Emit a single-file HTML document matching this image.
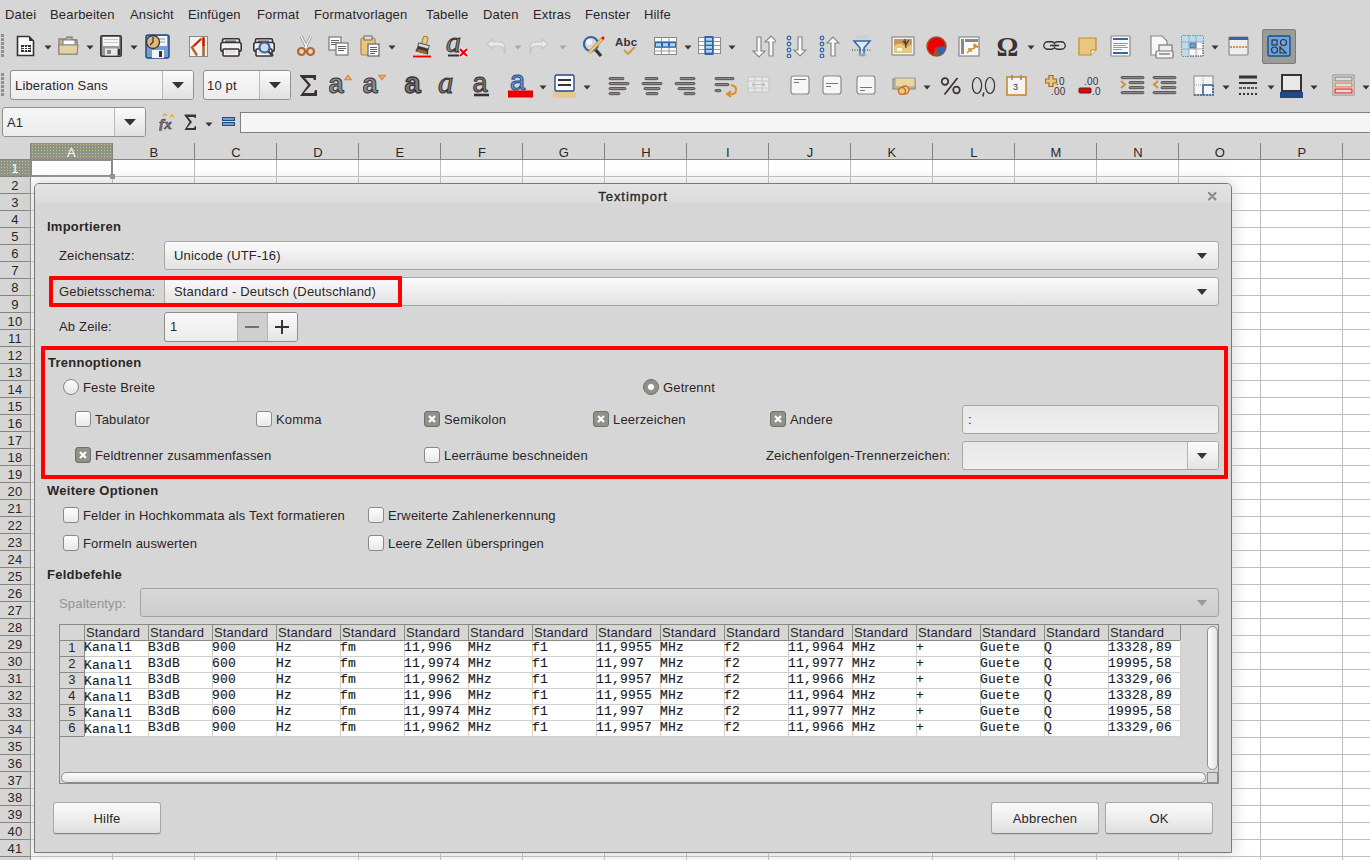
<!DOCTYPE html>
<html><head><meta charset="utf-8"><style>
*{margin:0;padding:0;box-sizing:border-box}
html,body{width:1370px;height:860px;overflow:hidden;background:#d6d6d6;font-family:"Liberation Sans",sans-serif;font-size:13px;color:#2b2627;letter-spacing:0.17px}
.a{position:absolute}
.t{position:absolute;white-space:nowrap;line-height:13px}
.b{font-weight:bold;letter-spacing:0.25px}
.combo{position:absolute;border:1px solid #a8a8a3;border-radius:3px;background:linear-gradient(#fbfbfb,#ededed 55%,#e2e2e2)}
.arr{position:absolute;width:0;height:0;border-left:5.5px solid transparent;border-right:5.5px solid transparent;border-top:6px solid #3a3135}
.red{position:absolute;border:4px solid #ff0000;border-radius:1px}
.cb{position:absolute;width:16px;height:16px;border:1px solid #8a8a85;border-radius:3px;background:linear-gradient(#fdfdfd,#e8e8e8)}
.cbx{position:absolute;width:16px;height:16px;border:1px solid #6e716a;border-radius:3px;background:#8f9289}
.rb{position:absolute;width:16px;height:16px;border:1px solid #85857f;border-radius:50%;background:linear-gradient(#fdfdfd,#e6e6e6)}
.btn{position:absolute;border:1px solid #a8a8a3;border-bottom-color:#8a8a85;box-shadow:0 1px 0 rgba(0,0,0,.08);border-radius:3px;background:linear-gradient(#fafafa,#ebebeb 60%,#dedede);text-align:center}
.gl{position:absolute;background:#c6c6c6}
</style></head><body>
<div class="a" style="left:1px;top:34px;width:3px;height:3px;background:#8f918b"></div>
<div class="a" style="left:1px;top:38px;width:3px;height:3px;background:#8f918b"></div>
<div class="a" style="left:1px;top:42px;width:3px;height:3px;background:#8f918b"></div>
<div class="a" style="left:1px;top:46px;width:3px;height:3px;background:#8f918b"></div>
<div class="a" style="left:1px;top:50px;width:3px;height:3px;background:#8f918b"></div>
<div class="a" style="left:1px;top:54px;width:3px;height:3px;background:#8f918b"></div>
<div class="a" style="left:1px;top:73px;width:3px;height:3px;background:#8f918b"></div>
<div class="a" style="left:1px;top:77px;width:3px;height:3px;background:#8f918b"></div>
<div class="a" style="left:1px;top:81px;width:3px;height:3px;background:#8f918b"></div>
<div class="a" style="left:1px;top:85px;width:3px;height:3px;background:#8f918b"></div>
<div class="a" style="left:1px;top:89px;width:3px;height:3px;background:#8f918b"></div>
<div class="a" style="left:1px;top:93px;width:3px;height:3px;background:#8f918b"></div>
<svg class="a" style="left:16px;top:35px" width="19" height="22" viewBox="0 0 19 22"><path d="M1.5 1.5H13L17.5 6V20.5H1.5Z" fill="#fbfbfb" stroke="#3a3135" stroke-width="1.6"/><path d="M13 1L18 6H13Z" fill="#3a3135"/><rect x="5" y="10" width="10" height="7" fill="#3a3135"/><path d="M5.5 12.5H14.5M5.5 14.5H14.5M8.5 10.5V16.5M11.5 10.5V16.5" stroke="#fff" stroke-width="1"/></svg>
<svg class="a" style="left:44px;top:45px" width="8" height="5" viewBox="0 0 8 5"><path d="M0.5 0.5H7.5L4 4.5Z" fill="#3a3135"/></svg>
<svg class="a" style="left:58px;top:36px" width="21" height="20" viewBox="0 0 21 20"><path d="M1 3H8L9 1H14V4H19V18H1Z" fill="#c8b48a" stroke="#888a85" stroke-width="1.5"/><rect x="5" y="4" width="12" height="5" fill="#fff" stroke="#777" stroke-width="1"/><path d="M1 9H20L19 18H1Z" fill="#e6d2a0" stroke="#888a85" stroke-width="1.2"/></svg>
<svg class="a" style="left:86px;top:45px" width="8" height="5" viewBox="0 0 8 5"><path d="M0.5 0.5H7.5L4 4.5Z" fill="#3a3135"/></svg>
<svg class="a" style="left:100px;top:35px" width="22" height="22" viewBox="0 0 22 22"><rect x="0.8" y="0.8" width="20.4" height="20.4" rx="1.5" fill="#9a9a96" stroke="#3a3135" stroke-width="1.6"/><rect x="3" y="2" width="16" height="9" fill="#f6f6f6"/><path d="M4 4.5H18M4 7.5H18" stroke="#c8c8c8"/><rect x="5" y="13.5" width="12" height="7" fill="#e8e8e8"/><rect x="7" y="15" width="4" height="4" fill="#888"/><rect x="18" y="14" width="2" height="6" fill="#3a3135"/></svg>
<svg class="a" style="left:130px;top:45px" width="8" height="5" viewBox="0 0 8 5"><path d="M0.5 0.5H7.5L4 4.5Z" fill="#3a3135"/></svg>
<svg class="a" style="left:145px;top:34px" width="25" height="25" viewBox="0 0 25 25"><rect x="1" y="1" width="23" height="23" rx="2" fill="#729fcf" stroke="#204a87" stroke-width="1.5"/><rect x="10" y="2" width="12" height="10" fill="#f4f4f4"/><path d="M12 5H20M12 8H20" stroke="#999"/><rect x="7" y="16" width="12" height="8" fill="#f4f4f4"/><rect x="14" y="17" width="3" height="6" fill="#3a3135"/><circle cx="8" cy="8" r="6.5" fill="#e0b87a" stroke="#3a3135" stroke-width="1.3"/><path d="M8 3V8L5 11" stroke="#3a3135" stroke-width="1.3" fill="none"/></svg>
<svg class="a" style="left:189px;top:36px" width="19" height="21" viewBox="0 0 19 21"><rect x="0.5" y="0.5" width="18" height="20" fill="#f2f2f2" stroke="#8a8a85" stroke-width="1"/><path d="M12.5 2.5L3 11.5L8 19.5" stroke="#b5672b" stroke-width="2.4" fill="none"/><path d="M11.5 3.5L5 10" stroke="#e00" stroke-width="1.3"/><path d="M14.5 1V20" stroke="#b5672b" stroke-width="2.6"/><path d="M14.5 2V10" stroke="#e00" stroke-width="2"/></svg>
<svg class="a" style="left:220px;top:38px" width="22" height="19" viewBox="0 0 22 19"><rect x="2.5" y="0.8" width="17" height="5" rx="1.5" fill="#e4e4e4" stroke="#3a3135" stroke-width="1.6"/><rect x="5" y="2.5" width="11" height="1.6" fill="#666"/><rect x="0.8" y="4.5" width="20.4" height="9" rx="2" fill="#f2f2f2" stroke="#3a3135" stroke-width="1.6"/><rect x="3" y="11" width="16" height="7" rx="1" fill="#f6f6f6" stroke="#3a3135" stroke-width="1.6"/><rect x="5" y="12" width="11" height="4" fill="#e4e4e4"/></svg>
<svg class="a" style="left:253px;top:38px" width="23" height="19" viewBox="0 0 23 19"><rect x="2.5" y="0.8" width="17" height="5" rx="1.5" fill="#e4e4e4" stroke="#3a3135" stroke-width="1.6"/><rect x="5" y="2.5" width="11" height="1.6" fill="#666"/><rect x="0.8" y="4.5" width="20.4" height="9" rx="2" fill="#f2f2f2" stroke="#3a3135" stroke-width="1.6"/><rect x="3" y="11" width="16" height="7" rx="1" fill="#f6f6f6" stroke="#3a3135" stroke-width="1.6"/><rect x="5" y="12" width="11" height="4" fill="#e4e4e4"/><circle cx="11.5" cy="9.5" r="5" fill="#d8d8d8" stroke="#3465a4" stroke-width="2.2"/><path d="M15.5 13.5L20 18" stroke="#3a3135" stroke-width="2.2"/></svg>
<svg class="a" style="left:297px;top:35px" width="18" height="22" viewBox="0 0 18 22"><path d="M4 1L10 13M14 1L8 13" stroke="#999" stroke-width="3"/><path d="M4 1L10 13M14 1L8 13" stroke="#f4f4f4" stroke-width="1.5"/><circle cx="4.5" cy="16.5" r="3.5" fill="none" stroke="#b5672b" stroke-width="2.2"/><circle cx="13.5" cy="16.5" r="3.5" fill="none" stroke="#b5672b" stroke-width="2.2"/></svg>
<svg class="a" style="left:328px;top:36px" width="21" height="20" viewBox="0 0 21 20"><rect x="1" y="1" width="12" height="13" fill="#fbfbfb" stroke="#777" stroke-width="1.2"/><path d="M3 4.5H11M3 6.5H11M3 8.5H9" stroke="#666"/><rect x="8" y="7" width="12" height="12" fill="#fbfbfb" stroke="#777" stroke-width="1.2"/><path d="M10 10.5H18M10 12.5H18M10 14.5H16" stroke="#666"/></svg>
<svg class="a" style="left:360px;top:35px" width="20" height="22" viewBox="0 0 20 22"><rect x="1" y="3" width="14" height="17" rx="1.5" fill="#e9c77f" stroke="#b08040" stroke-width="1.2"/><rect x="4" y="1" width="8" height="4" fill="#ddd" stroke="#666" stroke-width="1"/><rect x="8" y="9" width="11" height="12" fill="#fbfbfb" stroke="#666" stroke-width="1.2"/><path d="M10 12.5H17M10 14.5H17M10 16.5H17M10 18.5H15" stroke="#666"/></svg>
<svg class="a" style="left:388px;top:45px" width="8" height="5" viewBox="0 0 8 5"><path d="M0.5 0.5H7.5L4 4.5Z" fill="#3a3135"/></svg>
<svg class="a" style="left:411px;top:35px" width="24" height="23" viewBox="0 0 24 23"><g transform="rotate(15 12 11)"><rect x="10" y="1" width="5" height="9" rx="2.2" fill="#e9c77f" stroke="#a67c3a" stroke-width="1"/><rect x="7" y="9" width="11" height="3.5" fill="#dcdcdc" stroke="#555" stroke-width="1"/><path d="M7 12.5H18L19 18H6Z" fill="#3a3135"/><path d="M8 15H17L18 18H7Z" fill="#a0602a"/></g><path d="M2 21.5H20" stroke="#e00" stroke-width="1.8"/></svg>
<svg class="a" style="left:446px;top:35px" width="24" height="24" viewBox="0 0 24 24"><text x="0" y="17" font-family="Liberation Serif" font-style="italic" font-size="30" fill="#8a8a85" stroke="#3a3135" stroke-width="1">a</text><path d="M2 20.5H13" stroke="#3a3135" stroke-width="2"/><path d="M14 14L21 21M21 14L14 21" stroke="#fff" stroke-width="4"/><path d="M14 14L21 21M21 14L14 21" stroke="#e00" stroke-width="2.2"/></svg>
<svg class="a" style="left:485px;top:37px" width="22" height="17" viewBox="0 0 22 17"><path d="M8 2L2 7L8 12V9H14Q19 9 19 13V16H20V11Q20 5 14 5H8Z" fill="#eaeaea" stroke="#c4c4c4" stroke-width="1.2"/></svg>
<svg class="a" style="left:514px;top:45px" width="8" height="5" viewBox="0 0 8 5"><path d="M0.5 0.5H7.5L4 4.5Z" fill="#a9aaa5"/></svg>
<svg class="a" style="left:528px;top:37px" width="22" height="17" viewBox="0 0 22 17"><path d="M14 2L20 7L14 12V9H8Q3 9 3 13V16H2V11Q2 5 8 5H14Z" fill="#eaeaea" stroke="#c4c4c4" stroke-width="1.2"/></svg>
<svg class="a" style="left:559px;top:45px" width="8" height="5" viewBox="0 0 8 5"><path d="M0.5 0.5H7.5L4 4.5Z" fill="#a9aaa5"/></svg>
<svg class="a" style="left:582px;top:35px" width="23" height="22" viewBox="0 0 23 22"><path d="M13 14L19 21" stroke="#3a3135" stroke-width="3.2"/><circle cx="9" cy="9" r="7" fill="#d8d8d8" stroke="#3465a4" stroke-width="2.2"/><circle cx="7" cy="7" r="3" fill="#f4f4f4"/><path d="M21 3L7 18" stroke="#c8a050" stroke-width="3.5"/><path d="M21 3L7 18" stroke="#f0d890" stroke-width="1.2"/><circle cx="21" cy="3" r="1.5" fill="#e00"/></svg>
<svg class="a" style="left:615px;top:36px" width="23" height="21" viewBox="0 0 23 21"><text x="0" y="10" font-family="Liberation Sans" font-weight="bold" font-size="11.5" fill="#3a3135">Abc</text><path d="M9 14L13 18L20 11" stroke="#c8a050" stroke-width="2.2" fill="none"/></svg>
<svg class="a" style="left:654px;top:37px" width="23" height="18" viewBox="0 0 23 18"><rect x="0.5" y="0.5" width="22" height="17" fill="#fbfbfb" stroke="#8a8a85" stroke-width="1"/><path d="M0.5 4.5H22.5M0.5 10.5H22.5M0.5 14H22.5M7.5 0.5V17.5M15 0.5V17.5" stroke="#9a9a96" stroke-width="1"/><rect x="1" y="5" width="21" height="5.5" fill="#3465a4"/><rect x="2" y="6.2" width="5" height="3.2" fill="#a8d8f0"/><rect x="9" y="6.2" width="5" height="3.2" fill="#a8d8f0"/><rect x="16" y="6.2" width="5" height="3.2" fill="#a8d8f0"/></svg>
<svg class="a" style="left:684px;top:45px" width="8" height="5" viewBox="0 0 8 5"><path d="M0.5 0.5H7.5L4 4.5Z" fill="#3a3135"/></svg>
<svg class="a" style="left:698px;top:36px" width="23" height="19" viewBox="0 0 23 19"><rect x="0.5" y="1.5" width="22" height="16" fill="#fbfbfb" stroke="#8a8a85" stroke-width="1"/><path d="M0.5 5.5H22.5M0.5 9.5H22.5M0.5 13.5H22.5M7 1.5V17.5M15.5 1.5V17.5" stroke="#9a9a96" stroke-width="1"/><rect x="6.5" y="0" width="9" height="19" fill="#3465a4"/><rect x="8" y="2" width="6" height="2.6" fill="#a8d8f0"/><rect x="8" y="6" width="6" height="2.6" fill="#a8d8f0"/><rect x="8" y="10" width="6" height="2.6" fill="#a8d8f0"/><rect x="8" y="14" width="6" height="2.6" fill="#a8d8f0"/></svg>
<svg class="a" style="left:728px;top:45px" width="8" height="5" viewBox="0 0 8 5"><path d="M0.5 0.5H7.5L4 4.5Z" fill="#3a3135"/></svg>
<svg class="a" style="left:751px;top:35px" width="25" height="23" viewBox="0 0 25 23"><path d="M6 2V16H2L8 22L14 16H10V2Z" fill="#f8f8f8" stroke="#888" stroke-width="1.2"/><path d="M18 21V7H14L20 1L26 7H22V21Z" fill="#f8f8f8" stroke="#888" stroke-width="1.2"/></svg>
<svg class="a" style="left:786px;top:35px" width="21" height="23" viewBox="0 0 21 23"><g fill="none" stroke="#3465a4" stroke-width="1.2"><circle cx="3" cy="3" r="1.8"/><circle cx="3" cy="9" r="1.8"/><circle cx="3" cy="15" r="1.8"/><circle cx="3" cy="21" r="1.8"/></g><path d="M12 2V15H8L14 21L20 15H16V2Z" fill="#f8f8f8" stroke="#888" stroke-width="1.2"/></svg>
<svg class="a" style="left:819px;top:35px" width="21" height="23" viewBox="0 0 21 23"><g fill="none" stroke="#3465a4" stroke-width="1.2"><circle cx="3" cy="3" r="1.8"/><circle cx="3" cy="9" r="1.8"/><circle cx="3" cy="15" r="1.8"/><circle cx="3" cy="21" r="1.8"/></g><path d="M12 21V8H8L14 2L20 8H16V21Z" fill="#f8f8f8" stroke="#888" stroke-width="1.2"/></svg>
<svg class="a" style="left:851px;top:34px" width="22" height="24" viewBox="0 0 22 24"><rect x="4" y="1" width="14" height="4" fill="#ccc" opacity=".6"/><path d="M3 7H19L13 14V21H9V14Z" fill="#d8ecf8" stroke="#3465a4" stroke-width="1.5"/><path d="M1 16H21" stroke="#333" stroke-dasharray="1 1.5"/><ellipse cx="11" cy="21" rx="5" ry="2" fill="#bbb" opacity=".6"/></svg>
<svg class="a" style="left:891px;top:36px" width="24" height="20" viewBox="0 0 24 20"><rect x="1" y="1" width="22" height="18" fill="#f4f4f4" stroke="#888" stroke-width="1.2"/><rect x="3" y="3" width="18" height="14" fill="#c89a58"/><path d="M3 10Q8 6 12 9T21 8V17H3Z" fill="#e9c77f"/><path d="M14 3L15 12M12 5L15 8L18 4" stroke="#3a3135" stroke-width="1.2" fill="none"/><rect x="6" y="12" width="5" height="3" fill="#fff"/></svg>
<svg class="a" style="left:926px;top:36px" width="21" height="21" viewBox="0 0 21 21"><circle cx="10.5" cy="10.5" r="9.5" fill="#e00" stroke="#a0522d" stroke-width="1.5"/><path d="M10 11L20 10Q20 17 13 20Z" fill="#3465a4"/><path d="M10 11L7 19H13Z" fill="#a0522d"/></svg>
<svg class="a" style="left:958px;top:36px" width="22" height="21" viewBox="0 0 22 21"><rect x="1" y="1" width="20" height="19" fill="#fbfbfb" stroke="#888" stroke-width="1.2"/><rect x="3" y="3" width="3" height="15" fill="#888"/><rect x="7" y="3" width="13" height="3" fill="#888"/><path d="M9 17L13 13H10M13 13V16M16 8L20 11H17M16 8V11M13 13Q17 13 17 10" stroke="#d8902a" stroke-width="1.6" fill="none"/></svg>
<svg class="a" style="left:997px;top:37px" width="23" height="21" viewBox="0 0 23 21"><text x="-0.5" y="19" font-family="Liberation Serif" font-weight="bold" font-size="27" fill="#3a3135" textLength="22" lengthAdjust="spacingAndGlyphs">Ω</text></svg>
<svg class="a" style="left:1027px;top:45px" width="8" height="5" viewBox="0 0 8 5"><path d="M0.5 0.5H7.5L4 4.5Z" fill="#3a3135"/></svg>
<svg class="a" style="left:1043px;top:40px" width="23" height="12" viewBox="0 0 23 12"><rect x="1" y="2" width="11" height="7" rx="3.5" fill="none" stroke="#3a3135" stroke-width="1.8"/><rect x="11" y="2" width="11" height="7" rx="3.5" fill="none" stroke="#3a3135" stroke-width="1.8"/><rect x="1.8" y="3" width="9.4" height="5" rx="2.5" fill="none" stroke="#f0f0f0" stroke-width=".8"/><rect x="11.8" y="3" width="9.4" height="5" rx="2.5" fill="none" stroke="#f0f0f0" stroke-width=".8"/><path d="M7 5.5H16" stroke="#3a3135" stroke-width="1.6"/></svg>
<svg class="a" style="left:1078px;top:37px" width="19" height="19" viewBox="0 0 19 19"><path d="M1 1H18V13L13 18H1Z" fill="#e9c77f" stroke="#c8892a" stroke-width="1.2"/><path d="M13 18V13H18" fill="#fff3d0" stroke="#c8892a" stroke-width="1"/></svg>
<svg class="a" style="left:1110px;top:35px" width="21" height="22" viewBox="0 0 21 22"><rect x="1" y="1" width="19" height="20" rx="1" fill="#fbfbfb" stroke="#888" stroke-width="1.2"/><rect x="3" y="3" width="15" height="2" fill="#3465a4"/><path d="M3 8.5H18M3 10.5H16M3 12.5H18M3 14.5H12" stroke="#999"/><rect x="3" y="17" width="15" height="2" fill="#3465a4"/></svg>
<svg class="a" style="left:1150px;top:35px" width="24" height="24" viewBox="0 0 24 24"><path d="M1 1H12L17 6V20H1Z" fill="#f8f8f8" stroke="#888" stroke-width="1.2"/><rect x="9" y="10" width="13" height="8" fill="#eee" stroke="#777" stroke-width="1.2"/><rect x="6" y="16" width="17" height="7" rx="1" fill="#f4f4f4" stroke="#777" stroke-width="1.2"/><path d="M9 19H20" stroke="#666" stroke-width="1.2"/></svg>
<svg class="a" style="left:1181px;top:35px" width="23" height="22" viewBox="0 0 23 22"><rect x="1" y="1" width="21" height="20" fill="#fbfbfb" stroke="#3a3135" stroke-width="1" stroke-dasharray="1.5 1"/><rect x="1" y="1" width="21" height="6" fill="#b8dcf2"/><rect x="1" y="1" width="7" height="20" fill="#b8dcf2"/><rect x="9" y="8" width="6" height="5" fill="#729fcf" stroke="#3465a4"/><path d="M1 7H22M1 14H22M8 1V21M15 1V21" stroke="#999" stroke-width=".8"/></svg>
<svg class="a" style="left:1211px;top:45px" width="8" height="5" viewBox="0 0 8 5"><path d="M0.5 0.5H7.5L4 4.5Z" fill="#3a3135"/></svg>
<svg class="a" style="left:1228px;top:36px" width="21" height="20" viewBox="0 0 21 20"><rect x="1" y="1" width="19" height="18" rx="1" fill="#eee" stroke="#888" stroke-width="1.2"/><rect x="1" y="1" width="19" height="3" fill="#3465a4"/><path d="M2 11H19" stroke="#c8702a" stroke-width="1.4" stroke-dasharray="2 1"/></svg>
<div class="a" style="left:1262px;top:29px;width:34px;height:35px;background:#9a9c96;border:1px solid #7a7c76;border-radius:2px"></div>
<svg class="a" style="left:1267px;top:35px" width="24" height="22" viewBox="0 0 24 22"><rect x="1" y="1" width="22" height="20" rx="1.5" fill="#69a6e0" stroke="#1f4e8a" stroke-width="1.4"/><rect x="5" y="5" width="5" height="5" fill="none" stroke="#3a3135" stroke-width="1.2"/><circle cx="16.5" cy="7.5" r="3" fill="none" stroke="#3a3135" stroke-width="1.2"/><circle cx="7.5" cy="15" r="3" fill="none" stroke="#3a3135" stroke-width="1.2"/><path d="M13 12V18H19Z" fill="none" stroke="#3a3135" stroke-width="1.2"/></svg>
<div class="a" style="left:10px;top:70px;width:184px;height:30px;border:1px solid #8f918b;border-radius:3px;background:linear-gradient(#f9f9f9,#ececec)"></div>
<div class="a" style="left:162px;top:71px;width:31px;height:28px;border-left:1px solid #b9b9b4;background:linear-gradient(#fbfbfb,#e0e0e0);border-radius:0 2px 2px 0"></div>
<svg class="a" style="left:172px;top:82px" width="12" height="7" viewBox="0 0 12 7"><path d="M0 0H12L6 6.5Z" fill="#3a3135"/></svg>
<div class="t" style="left:15px;top:79px">Liberation Sans</div>
<div class="a" style="left:203px;top:70px;width:88px;height:30px;border:1px solid #8f918b;border-radius:3px;background:linear-gradient(#f9f9f9,#ececec)"></div>
<div class="a" style="left:259px;top:71px;width:31px;height:28px;border-left:1px solid #b9b9b4;background:linear-gradient(#fbfbfb,#e0e0e0);border-radius:0 2px 2px 0"></div>
<svg class="a" style="left:269px;top:82px" width="12" height="7" viewBox="0 0 12 7"><path d="M0 0H12L6 6.5Z" fill="#3a3135"/></svg>
<div class="t" style="left:207px;top:79px">10 pt</div>
<svg class="a" style="left:299px;top:74px" width="19" height="23" viewBox="0 0 19 23"><path d="M1 1H17V6H15L14 4H6L12 11L5 19H15L16 16H18V22H1L9 11L1 2Z" fill="#3a3135"/></svg>
<svg class="a" style="left:329px;top:72px" width="24" height="24" viewBox="0 0 24 24"><text x="-0.5" y="20.5" font-family="Liberation Sans" font-weight="bold" font-size="27" fill="#8a8a85" stroke="#3a3135" stroke-width="1">a</text><path d="M16 7.5L19 3.5L22 7.5Z" fill="none" stroke="#d8902a" stroke-width="1.5"/></svg>
<svg class="a" style="left:363px;top:72px" width="24" height="24" viewBox="0 0 24 24"><text x="-0.5" y="20.5" font-family="Liberation Sans" font-weight="bold" font-size="27" fill="#8a8a85" stroke="#3a3135" stroke-width="1">a</text><path d="M16 3.5L19 7.5L22 3.5Z" fill="none" stroke="#d8902a" stroke-width="1.5"/></svg>
<svg class="a" style="left:404px;top:72px" width="22" height="24" viewBox="0 0 22 24"><text x="0.5" y="20.5" font-family="Liberation Sans" font-weight="bold" font-size="29" fill="#7a7a75" stroke="#3a3135" stroke-width="1.3">a</text></svg>
<svg class="a" style="left:438px;top:72px" width="22" height="24" viewBox="0 0 22 24"><text x="0" y="20.5" font-family="Liberation Serif" font-style="italic" font-size="31" fill="#7a7a75" stroke="#3a3135" stroke-width="1">a</text></svg>
<svg class="a" style="left:472px;top:72px" width="20" height="26" viewBox="0 0 20 26"><text x="0.5" y="20" font-family="Liberation Sans" font-size="27" fill="#7a7a75" stroke="#3a3135" stroke-width="1">a</text><path d="M2 23H17" stroke="#3a3135" stroke-width="2.6"/></svg>
<svg class="a" style="left:508px;top:72px" width="25" height="26" viewBox="0 0 25 26"><text x="2" y="17.5" font-family="Liberation Sans" font-size="27" fill="#729fcf" stroke="#204a87" stroke-width="1">a</text><rect x="0.5" y="19" width="24" height="6" fill="#e00" stroke="#d00"/></svg>
<svg class="a" style="left:539px;top:85px" width="8" height="5" viewBox="0 0 8 5"><path d="M0.5 0.5H7.5L4 4.5Z" fill="#3a3135"/></svg>
<svg class="a" style="left:552px;top:74px" width="25" height="24" viewBox="0 0 25 24"><rect x="3" y="1" width="19" height="16" rx="1.5" fill="#fbfbfb" stroke="#204a87" stroke-width="1.4"/><path d="M6 6H19M6 11H19" stroke="#3a3135" stroke-width="2"/><rect x="1" y="18" width="23" height="6" fill="#e5c98d"/></svg>
<svg class="a" style="left:583px;top:85px" width="8" height="5" viewBox="0 0 8 5"><path d="M0.5 0.5H7.5L4 4.5Z" fill="#3a3135"/></svg>
<svg class="a" style="left:608px;top:76px" width="22" height="20" viewBox="0 0 22 20"><rect x="1" y="1.5" width="15" height="2.2" rx="1.1" fill="#8a8a85" stroke="#3a3135" stroke-width=".7"/><rect x="1" y="6.5" width="20" height="2.2" rx="1.1" fill="#8a8a85" stroke="#3a3135" stroke-width=".7"/><rect x="1" y="11.5" width="17" height="2.2" rx="1.1" fill="#8a8a85" stroke="#3a3135" stroke-width=".7"/><rect x="1" y="16.5" width="11" height="2.2" rx="1.1" fill="#8a8a85" stroke="#3a3135" stroke-width=".7"/></svg>
<svg class="a" style="left:641px;top:76px" width="22" height="20" viewBox="0 0 22 20"><rect x="4" y="1.5" width="13" height="2.2" rx="1.1" fill="#8a8a85" stroke="#3a3135" stroke-width=".7"/><rect x="1" y="6.5" width="20" height="2.2" rx="1.1" fill="#8a8a85" stroke="#3a3135" stroke-width=".7"/><rect x="3" y="11.5" width="16" height="2.2" rx="1.1" fill="#8a8a85" stroke="#3a3135" stroke-width=".7"/><rect x="5" y="16.5" width="12" height="2.2" rx="1.1" fill="#8a8a85" stroke="#3a3135" stroke-width=".7"/></svg>
<svg class="a" style="left:674px;top:76px" width="22" height="20" viewBox="0 0 22 20"><rect x="6" y="1.5" width="15" height="2.2" rx="1.1" fill="#8a8a85" stroke="#3a3135" stroke-width=".7"/><rect x="1" y="6.5" width="20" height="2.2" rx="1.1" fill="#8a8a85" stroke="#3a3135" stroke-width=".7"/><rect x="4" y="11.5" width="17" height="2.2" rx="1.1" fill="#8a8a85" stroke="#3a3135" stroke-width=".7"/><rect x="10" y="16.5" width="11" height="2.2" rx="1.1" fill="#8a8a85" stroke="#3a3135" stroke-width=".7"/></svg>
<svg class="a" style="left:714px;top:76px" width="24" height="22" viewBox="0 0 24 22"><rect x="1" y="1.5" width="19" height="2.2" rx="1.1" fill="#8a8a85" stroke="#3a3135" stroke-width=".7"/><rect x="1" y="7.5" width="14" height="2.2" rx="1.1" fill="#8a8a85" stroke="#3a3135" stroke-width=".7"/><rect x="1" y="13.5" width="6" height="2.2" rx="1.1" fill="#8a8a85" stroke="#3a3135" stroke-width=".7"/><path d="M17 9Q23 10 22 15Q21 19 14 18M17 15L13 18L17 21" stroke="#d8902a" stroke-width="2" fill="none"/></svg>
<svg class="a" style="left:747px;top:76px" width="23" height="17" viewBox="0 0 23 17"><rect x="1" y="1" width="21" height="15" fill="#e8e8e8" stroke="#c4c4c4"/><path d="M1 5H22M1 12H22M8 1V5M15 1V5M8 12V16M15 12V16" stroke="#c4c4c4"/><path d="M5 8.5H18M5 8.5L8 6.5M5 8.5L8 10.5M18 8.5L15 6.5M18 8.5L15 10.5" stroke="#bdbdbd" stroke-width="1.2"/></svg>
<svg class="a" style="left:790px;top:75px" width="20" height="20" viewBox="0 0 20 20"><rect x="1" y="1" width="18" height="18" rx="2.5" fill="#f6f6f6" stroke="#8a8a85" stroke-width="1.2"/><path d="M4 4.5H16M4 7.5H9" stroke="#777" stroke-width="1"/></svg>
<svg class="a" style="left:822px;top:75px" width="20" height="20" viewBox="0 0 20 20"><rect x="1" y="1" width="18" height="18" rx="2.5" fill="#f6f6f6" stroke="#8a8a85" stroke-width="1.2"/><path d="M4 8.5H16M4 11.5H9" stroke="#777" stroke-width="1"/></svg>
<svg class="a" style="left:856px;top:75px" width="20" height="20" viewBox="0 0 20 20"><rect x="1" y="1" width="18" height="18" rx="2.5" fill="#f6f6f6" stroke="#8a8a85" stroke-width="1.2"/><path d="M4 12.5H16M4 15.5H9" stroke="#777" stroke-width="1"/></svg>
<svg class="a" style="left:892px;top:77px" width="24" height="18" viewBox="0 0 24 18"><rect x="1" y="2" width="22" height="10" fill="#d8c48a" stroke="#888" stroke-width="1.2"/><rect x="3" y="1" width="20" height="9" fill="#e8d8a0" stroke="#999" stroke-width="1"/><circle cx="13" cy="13" r="4" fill="#e9c77f" stroke="#c8702a" stroke-width="1.4"/><circle cx="10" cy="14" r="3.5" fill="#e9c77f" stroke="#c8702a" stroke-width="1.4"/></svg>
<svg class="a" style="left:923px;top:85px" width="8" height="5" viewBox="0 0 8 5"><path d="M0.5 0.5H7.5L4 4.5Z" fill="#3a3135"/></svg>
<svg class="a" style="left:940px;top:77px" width="22" height="18" viewBox="0 0 22 18"><circle cx="5" cy="4.5" r="3.3" fill="none" stroke="#3a3135" stroke-width="1.7"/><circle cx="16.5" cy="13" r="3.3" fill="none" stroke="#3a3135" stroke-width="1.7"/><path d="M17.5 1L4.5 17.5" stroke="#3a3135" stroke-width="1.7"/></svg>
<svg class="a" style="left:971px;top:76px" width="25" height="22" viewBox="0 0 25 22"><ellipse cx="6" cy="9.5" rx="4.6" ry="8" fill="none" stroke="#3a3135" stroke-width="1.2"/><ellipse cx="19" cy="9.5" rx="4.6" ry="8" fill="none" stroke="#3a3135" stroke-width="1.2"/><path d="M12.8 16.5L11.8 20.5" stroke="#3a3135" stroke-width="1.4"/></svg>
<svg class="a" style="left:1006px;top:74px" width="21" height="22" viewBox="0 0 21 22"><rect x="1" y="3" width="19" height="18" fill="#f4f4f4" stroke="#c8892a" stroke-width="1.6"/><path d="M6 1V6M15 1V6" stroke="#888" stroke-width="1.5"/><text x="7" y="16" font-family="Liberation Sans" font-size="9" fill="#3a3135">3</text></svg>
<svg class="a" style="left:1045px;top:74px" width="23" height="22" viewBox="0 0 23 22"><path d="M3 0.5H7V4H10.5V8H7V11.5H3V8H-0.5V4H3Z" transform="translate(1,1)" fill="#e9c77f" stroke="#a06a2a" stroke-width="1.2"/><text x="11" y="11" font-family="Liberation Sans" font-size="10" fill="#3a3135">.0</text><text x="6" y="21" font-family="Liberation Sans" font-size="10" fill="#3a3135">.00</text></svg>
<svg class="a" style="left:1078px;top:76px" width="23" height="20" viewBox="0 0 23 20"><text x="6" y="9" font-family="Liberation Sans" font-size="10" fill="#3a3135">.00</text><rect x="1" y="12" width="12" height="5" rx="1" fill="#e00" stroke="#3a3135" stroke-width="1"/><text x="14" y="19" font-family="Liberation Sans" font-size="10" fill="#3a3135">.0</text></svg>
<svg class="a" style="left:1120px;top:75px" width="25" height="20" viewBox="0 0 25 20"><rect x="1" y="1.5" width="23" height="2.2" rx="1.1" fill="#8a8a85" stroke="#3a3135" stroke-width=".7"/><rect x="9" y="6.5" width="15" height="2.2" rx="1.1" fill="#8a8a85" stroke="#3a3135" stroke-width=".7"/><rect x="9" y="11.5" width="15" height="2.2" rx="1.1" fill="#8a8a85" stroke="#3a3135" stroke-width=".7"/><rect x="1" y="16.5" width="23" height="2.2" rx="1.1" fill="#8a8a85" stroke="#3a3135" stroke-width=".7"/><path d="M1 6L5 9.5L1 13" stroke="#d8902a" stroke-width="2" fill="none"/></svg>
<svg class="a" style="left:1152px;top:75px" width="25" height="20" viewBox="0 0 25 20"><rect x="1" y="1.5" width="23" height="2.2" rx="1.1" fill="#8a8a85" stroke="#3a3135" stroke-width=".7"/><rect x="9" y="6.5" width="15" height="2.2" rx="1.1" fill="#8a8a85" stroke="#3a3135" stroke-width=".7"/><rect x="9" y="11.5" width="15" height="2.2" rx="1.1" fill="#8a8a85" stroke="#3a3135" stroke-width=".7"/><rect x="1" y="16.5" width="23" height="2.2" rx="1.1" fill="#8a8a85" stroke="#3a3135" stroke-width=".7"/><path d="M6 6L2 9.5L6 13" stroke="#d8902a" stroke-width="2" fill="none"/></svg>
<svg class="a" style="left:1193px;top:75px" width="21" height="21" viewBox="0 0 21 21"><rect x="1" y="1" width="19" height="19" fill="#f4f4f4" stroke="#888" stroke-width="1"/><path d="M10 1V10H20M1 10H10V20" stroke="#999" stroke-dasharray="1 1" fill="none"/><path d="M10 20V10H20" stroke="#3465a4" stroke-width="1.6" fill="none"/><path d="M1 20H20V10" stroke="#3465a4" stroke-width="1.6" fill="none" stroke-dasharray="2 1"/></svg>
<svg class="a" style="left:1222px;top:85px" width="8" height="5" viewBox="0 0 8 5"><path d="M0.5 0.5H7.5L4 4.5Z" fill="#3a3135"/></svg>
<svg class="a" style="left:1238px;top:75px" width="20" height="21" viewBox="0 0 20 21"><path d="M1 2H19" stroke="#3a3135" stroke-width="3"/><path d="M1 8H19" stroke="#3a3135" stroke-width="2"/><path d="M1 13H19" stroke="#3a3135" stroke-width="1.5" stroke-dasharray="3 1"/><path d="M1 19H19" stroke="#3a3135" stroke-width="2" stroke-dasharray="2 2"/></svg>
<svg class="a" style="left:1267px;top:85px" width="8" height="5" viewBox="0 0 8 5"><path d="M0.5 0.5H7.5L4 4.5Z" fill="#3a3135"/></svg>
<svg class="a" style="left:1279px;top:74px" width="25" height="24" viewBox="0 0 25 24"><rect x="3" y="1" width="19" height="16" fill="#e8e8e8" stroke="#3a3135" stroke-width="2"/><rect x="1" y="18" width="23" height="6" fill="#204a87"/></svg>
<svg class="a" style="left:1310px;top:85px" width="8" height="5" viewBox="0 0 8 5"><path d="M0.5 0.5H7.5L4 4.5Z" fill="#3a3135"/></svg>
<svg class="a" style="left:1332px;top:74px" width="23" height="22" viewBox="0 0 23 22"><rect x="1" y="1" width="21" height="20" fill="#f4f4f4" stroke="#888" stroke-width="1"/><rect x="3" y="3" width="17" height="4" fill="#ddd" stroke="#777"/><rect x="3" y="9" width="17" height="4" fill="#ddd" stroke="#c8702a"/><rect x="3" y="15" width="17" height="4" fill="#ddd" stroke="#e00"/></svg>
<svg class="a" style="left:1362px;top:85px" width="8" height="5" viewBox="0 0 8 5"><path d="M0.5 0.5H7.5L4 4.5Z" fill="#3a3135"/></svg>
<div class="a" style="left:2px;top:107px;width:144px;height:30px;border:1px solid #8f918b;border-radius:3px;background:linear-gradient(#f6f6f6,#ececec)"></div>
<div class="a" style="left:114px;top:108px;width:31px;height:28px;border-left:1px solid #b9b9b4;background:linear-gradient(#fbfbfb,#e0e0e0);border-radius:0 2px 2px 0"></div>
<svg class="a" style="left:124px;top:119px" width="12" height="7" viewBox="0 0 12 7"><path d="M0 0H12L6 6.5Z" fill="#3a3135"/></svg>
<div class="t" style="left:7px;top:116px">A1</div>
<svg class="a" style="left:159px;top:113px" width="17" height="18" viewBox="0 0 17 18"><text x="0" y="16" font-family="Liberation Serif" font-style="italic" font-weight="bold" font-size="15" fill="#7a7a75" stroke="#3a3135" stroke-width=".5">fx</text><path d="M4 3L6 1L8 3M11 4L13 2L15 4" stroke="#e9b03a" stroke-width="1.6" fill="none"/></svg>
<svg class="a" style="left:184px;top:114px" width="13" height="17" viewBox="0 0 13 17"><path d="M0.5 0.5H12V4H11L10 3H4L8 8L3 14H10L11 12H12V16H0.5L5.5 8L0.5 1.5Z" fill="#3a3135"/></svg>
<svg class="a" style="left:205px;top:122px" width="8" height="5" viewBox="0 0 8 5"><path d="M0.5 0.5H7.5L4 4.5Z" fill="#3a3135"/></svg>
<svg class="a" style="left:222px;top:117px" width="13" height="10" viewBox="0 0 13 10"><rect x="0.5" y="0.5" width="12" height="3" fill="#729fcf" stroke="#204a87"/><rect x="0.5" y="5.5" width="12" height="3" fill="#729fcf" stroke="#204a87"/></svg>
<div class="a" style="left:240px;top:112px;width:1140px;height:21px;border:1px solid #7f817b;background:#f5f5f5"></div>
<div class="t" style="left:5px;top:8px;">Datei</div>
<div class="t" style="left:50px;top:8px;">Bearbeiten</div>
<div class="t" style="left:130px;top:8px;">Ansicht</div>
<div class="t" style="left:188px;top:8px;">Einfügen</div>
<div class="t" style="left:257px;top:8px;">Format</div>
<div class="t" style="left:314px;top:8px;">Formatvorlagen</div>
<div class="t" style="left:426px;top:8px;">Tabelle</div>
<div class="t" style="left:483px;top:8px;">Daten</div>
<div class="t" style="left:533px;top:8px;">Extras</div>
<div class="t" style="left:585px;top:8px;">Fenster</div>
<div class="t" style="left:644px;top:8px;">Hilfe</div>
<div class="a" style="left:0px;top:159px;width:1370px;height:701px;background:#fff"></div>
<div class="a" style="left:0px;top:143px;width:1370px;height:16px;background:#d6d6d6"></div>
<div class="a" style="left:0px;top:159px;width:1370px;height:1px;background:#84847f"></div>
<div class="a" style="left:0px;top:160px;width:30px;height:700px;background:#d6d6d6"></div>
<div class="a" style="left:30px;top:143px;width:1px;height:717px;background:#84847f"></div>
<div class="a" style="left:112px;top:160px;width:1px;height:700px;background:#bebebe"></div>
<div class="a" style="left:112px;top:143px;width:1px;height:16px;background:#84847f"></div>
<div class="a" style="left:194px;top:160px;width:1px;height:700px;background:#bebebe"></div>
<div class="a" style="left:194px;top:143px;width:1px;height:16px;background:#84847f"></div>
<div class="a" style="left:276px;top:160px;width:1px;height:700px;background:#bebebe"></div>
<div class="a" style="left:276px;top:143px;width:1px;height:16px;background:#84847f"></div>
<div class="a" style="left:358px;top:160px;width:1px;height:700px;background:#bebebe"></div>
<div class="a" style="left:358px;top:143px;width:1px;height:16px;background:#84847f"></div>
<div class="a" style="left:440px;top:160px;width:1px;height:700px;background:#bebebe"></div>
<div class="a" style="left:440px;top:143px;width:1px;height:16px;background:#84847f"></div>
<div class="a" style="left:522px;top:160px;width:1px;height:700px;background:#bebebe"></div>
<div class="a" style="left:522px;top:143px;width:1px;height:16px;background:#84847f"></div>
<div class="a" style="left:604px;top:160px;width:1px;height:700px;background:#bebebe"></div>
<div class="a" style="left:604px;top:143px;width:1px;height:16px;background:#84847f"></div>
<div class="a" style="left:686px;top:160px;width:1px;height:700px;background:#bebebe"></div>
<div class="a" style="left:686px;top:143px;width:1px;height:16px;background:#84847f"></div>
<div class="a" style="left:768px;top:160px;width:1px;height:700px;background:#bebebe"></div>
<div class="a" style="left:768px;top:143px;width:1px;height:16px;background:#84847f"></div>
<div class="a" style="left:850px;top:160px;width:1px;height:700px;background:#bebebe"></div>
<div class="a" style="left:850px;top:143px;width:1px;height:16px;background:#84847f"></div>
<div class="a" style="left:932px;top:160px;width:1px;height:700px;background:#bebebe"></div>
<div class="a" style="left:932px;top:143px;width:1px;height:16px;background:#84847f"></div>
<div class="a" style="left:1014px;top:160px;width:1px;height:700px;background:#bebebe"></div>
<div class="a" style="left:1014px;top:143px;width:1px;height:16px;background:#84847f"></div>
<div class="a" style="left:1096px;top:160px;width:1px;height:700px;background:#bebebe"></div>
<div class="a" style="left:1096px;top:143px;width:1px;height:16px;background:#84847f"></div>
<div class="a" style="left:1178px;top:160px;width:1px;height:700px;background:#bebebe"></div>
<div class="a" style="left:1178px;top:143px;width:1px;height:16px;background:#84847f"></div>
<div class="a" style="left:1260px;top:160px;width:1px;height:700px;background:#bebebe"></div>
<div class="a" style="left:1260px;top:143px;width:1px;height:16px;background:#84847f"></div>
<div class="a" style="left:1342px;top:160px;width:1px;height:700px;background:#bebebe"></div>
<div class="a" style="left:1342px;top:143px;width:1px;height:16px;background:#84847f"></div>
<div class="t" style="left:52px;top:146px;width:40px;text-align:center;color:#fff">A</div>
<div class="t" style="left:134px;top:146px;width:40px;text-align:center;">B</div>
<div class="t" style="left:216px;top:146px;width:40px;text-align:center;">C</div>
<div class="t" style="left:298px;top:146px;width:40px;text-align:center;">D</div>
<div class="t" style="left:380px;top:146px;width:40px;text-align:center;">E</div>
<div class="t" style="left:462px;top:146px;width:40px;text-align:center;">F</div>
<div class="t" style="left:544px;top:146px;width:40px;text-align:center;">G</div>
<div class="t" style="left:626px;top:146px;width:40px;text-align:center;">H</div>
<div class="t" style="left:708px;top:146px;width:40px;text-align:center;">I</div>
<div class="t" style="left:790px;top:146px;width:40px;text-align:center;">J</div>
<div class="t" style="left:872px;top:146px;width:40px;text-align:center;">K</div>
<div class="t" style="left:954px;top:146px;width:40px;text-align:center;">L</div>
<div class="t" style="left:1036px;top:146px;width:40px;text-align:center;">M</div>
<div class="t" style="left:1118px;top:146px;width:40px;text-align:center;">N</div>
<div class="t" style="left:1200px;top:146px;width:40px;text-align:center;">O</div>
<div class="t" style="left:1282px;top:146px;width:40px;text-align:center;">P</div>
<div class="a" style="left:31px;top:176px;width:1339px;height:1px;background:#bebebe"></div>
<div class="a" style="left:0px;top:176px;width:30px;height:1px;background:#84847f"></div>
<div class="t" style="left:0px;top:162px;width:30px;text-align:center;color:#fff">1</div>
<div class="a" style="left:31px;top:193px;width:1339px;height:1px;background:#bebebe"></div>
<div class="a" style="left:0px;top:193px;width:30px;height:1px;background:#84847f"></div>
<div class="t" style="left:0px;top:179px;width:30px;text-align:center;">2</div>
<div class="a" style="left:31px;top:210px;width:1339px;height:1px;background:#bebebe"></div>
<div class="a" style="left:0px;top:210px;width:30px;height:1px;background:#84847f"></div>
<div class="t" style="left:0px;top:196px;width:30px;text-align:center;">3</div>
<div class="a" style="left:31px;top:227px;width:1339px;height:1px;background:#bebebe"></div>
<div class="a" style="left:0px;top:227px;width:30px;height:1px;background:#84847f"></div>
<div class="t" style="left:0px;top:213px;width:30px;text-align:center;">4</div>
<div class="a" style="left:31px;top:244px;width:1339px;height:1px;background:#bebebe"></div>
<div class="a" style="left:0px;top:244px;width:30px;height:1px;background:#84847f"></div>
<div class="t" style="left:0px;top:230px;width:30px;text-align:center;">5</div>
<div class="a" style="left:31px;top:261px;width:1339px;height:1px;background:#bebebe"></div>
<div class="a" style="left:0px;top:261px;width:30px;height:1px;background:#84847f"></div>
<div class="t" style="left:0px;top:247px;width:30px;text-align:center;">6</div>
<div class="a" style="left:31px;top:278px;width:1339px;height:1px;background:#bebebe"></div>
<div class="a" style="left:0px;top:278px;width:30px;height:1px;background:#84847f"></div>
<div class="t" style="left:0px;top:264px;width:30px;text-align:center;">7</div>
<div class="a" style="left:31px;top:295px;width:1339px;height:1px;background:#bebebe"></div>
<div class="a" style="left:0px;top:295px;width:30px;height:1px;background:#84847f"></div>
<div class="t" style="left:0px;top:281px;width:30px;text-align:center;">8</div>
<div class="a" style="left:31px;top:312px;width:1339px;height:1px;background:#bebebe"></div>
<div class="a" style="left:0px;top:312px;width:30px;height:1px;background:#84847f"></div>
<div class="t" style="left:0px;top:298px;width:30px;text-align:center;">9</div>
<div class="a" style="left:31px;top:329px;width:1339px;height:1px;background:#bebebe"></div>
<div class="a" style="left:0px;top:329px;width:30px;height:1px;background:#84847f"></div>
<div class="t" style="left:0px;top:315px;width:30px;text-align:center;">10</div>
<div class="a" style="left:31px;top:346px;width:1339px;height:1px;background:#bebebe"></div>
<div class="a" style="left:0px;top:346px;width:30px;height:1px;background:#84847f"></div>
<div class="t" style="left:0px;top:332px;width:30px;text-align:center;">11</div>
<div class="a" style="left:31px;top:363px;width:1339px;height:1px;background:#bebebe"></div>
<div class="a" style="left:0px;top:363px;width:30px;height:1px;background:#84847f"></div>
<div class="t" style="left:0px;top:349px;width:30px;text-align:center;">12</div>
<div class="a" style="left:31px;top:380px;width:1339px;height:1px;background:#bebebe"></div>
<div class="a" style="left:0px;top:380px;width:30px;height:1px;background:#84847f"></div>
<div class="t" style="left:0px;top:366px;width:30px;text-align:center;">13</div>
<div class="a" style="left:31px;top:397px;width:1339px;height:1px;background:#bebebe"></div>
<div class="a" style="left:0px;top:397px;width:30px;height:1px;background:#84847f"></div>
<div class="t" style="left:0px;top:383px;width:30px;text-align:center;">14</div>
<div class="a" style="left:31px;top:414px;width:1339px;height:1px;background:#bebebe"></div>
<div class="a" style="left:0px;top:414px;width:30px;height:1px;background:#84847f"></div>
<div class="t" style="left:0px;top:400px;width:30px;text-align:center;">15</div>
<div class="a" style="left:31px;top:431px;width:1339px;height:1px;background:#bebebe"></div>
<div class="a" style="left:0px;top:431px;width:30px;height:1px;background:#84847f"></div>
<div class="t" style="left:0px;top:417px;width:30px;text-align:center;">16</div>
<div class="a" style="left:31px;top:448px;width:1339px;height:1px;background:#bebebe"></div>
<div class="a" style="left:0px;top:448px;width:30px;height:1px;background:#84847f"></div>
<div class="t" style="left:0px;top:434px;width:30px;text-align:center;">17</div>
<div class="a" style="left:31px;top:465px;width:1339px;height:1px;background:#bebebe"></div>
<div class="a" style="left:0px;top:465px;width:30px;height:1px;background:#84847f"></div>
<div class="t" style="left:0px;top:451px;width:30px;text-align:center;">18</div>
<div class="a" style="left:31px;top:482px;width:1339px;height:1px;background:#bebebe"></div>
<div class="a" style="left:0px;top:482px;width:30px;height:1px;background:#84847f"></div>
<div class="t" style="left:0px;top:468px;width:30px;text-align:center;">19</div>
<div class="a" style="left:31px;top:499px;width:1339px;height:1px;background:#bebebe"></div>
<div class="a" style="left:0px;top:499px;width:30px;height:1px;background:#84847f"></div>
<div class="t" style="left:0px;top:485px;width:30px;text-align:center;">20</div>
<div class="a" style="left:31px;top:516px;width:1339px;height:1px;background:#bebebe"></div>
<div class="a" style="left:0px;top:516px;width:30px;height:1px;background:#84847f"></div>
<div class="t" style="left:0px;top:502px;width:30px;text-align:center;">21</div>
<div class="a" style="left:31px;top:533px;width:1339px;height:1px;background:#bebebe"></div>
<div class="a" style="left:0px;top:533px;width:30px;height:1px;background:#84847f"></div>
<div class="t" style="left:0px;top:519px;width:30px;text-align:center;">22</div>
<div class="a" style="left:31px;top:550px;width:1339px;height:1px;background:#bebebe"></div>
<div class="a" style="left:0px;top:550px;width:30px;height:1px;background:#84847f"></div>
<div class="t" style="left:0px;top:536px;width:30px;text-align:center;">23</div>
<div class="a" style="left:31px;top:567px;width:1339px;height:1px;background:#bebebe"></div>
<div class="a" style="left:0px;top:567px;width:30px;height:1px;background:#84847f"></div>
<div class="t" style="left:0px;top:553px;width:30px;text-align:center;">24</div>
<div class="a" style="left:31px;top:584px;width:1339px;height:1px;background:#bebebe"></div>
<div class="a" style="left:0px;top:584px;width:30px;height:1px;background:#84847f"></div>
<div class="t" style="left:0px;top:570px;width:30px;text-align:center;">25</div>
<div class="a" style="left:31px;top:601px;width:1339px;height:1px;background:#bebebe"></div>
<div class="a" style="left:0px;top:601px;width:30px;height:1px;background:#84847f"></div>
<div class="t" style="left:0px;top:587px;width:30px;text-align:center;">26</div>
<div class="a" style="left:31px;top:618px;width:1339px;height:1px;background:#bebebe"></div>
<div class="a" style="left:0px;top:618px;width:30px;height:1px;background:#84847f"></div>
<div class="t" style="left:0px;top:604px;width:30px;text-align:center;">27</div>
<div class="a" style="left:31px;top:635px;width:1339px;height:1px;background:#bebebe"></div>
<div class="a" style="left:0px;top:635px;width:30px;height:1px;background:#84847f"></div>
<div class="t" style="left:0px;top:621px;width:30px;text-align:center;">28</div>
<div class="a" style="left:31px;top:652px;width:1339px;height:1px;background:#bebebe"></div>
<div class="a" style="left:0px;top:652px;width:30px;height:1px;background:#84847f"></div>
<div class="t" style="left:0px;top:638px;width:30px;text-align:center;">29</div>
<div class="a" style="left:31px;top:669px;width:1339px;height:1px;background:#bebebe"></div>
<div class="a" style="left:0px;top:669px;width:30px;height:1px;background:#84847f"></div>
<div class="t" style="left:0px;top:655px;width:30px;text-align:center;">30</div>
<div class="a" style="left:31px;top:686px;width:1339px;height:1px;background:#bebebe"></div>
<div class="a" style="left:0px;top:686px;width:30px;height:1px;background:#84847f"></div>
<div class="t" style="left:0px;top:672px;width:30px;text-align:center;">31</div>
<div class="a" style="left:31px;top:703px;width:1339px;height:1px;background:#bebebe"></div>
<div class="a" style="left:0px;top:703px;width:30px;height:1px;background:#84847f"></div>
<div class="t" style="left:0px;top:689px;width:30px;text-align:center;">32</div>
<div class="a" style="left:31px;top:720px;width:1339px;height:1px;background:#bebebe"></div>
<div class="a" style="left:0px;top:720px;width:30px;height:1px;background:#84847f"></div>
<div class="t" style="left:0px;top:706px;width:30px;text-align:center;">33</div>
<div class="a" style="left:31px;top:737px;width:1339px;height:1px;background:#bebebe"></div>
<div class="a" style="left:0px;top:737px;width:30px;height:1px;background:#84847f"></div>
<div class="t" style="left:0px;top:723px;width:30px;text-align:center;">34</div>
<div class="a" style="left:31px;top:754px;width:1339px;height:1px;background:#bebebe"></div>
<div class="a" style="left:0px;top:754px;width:30px;height:1px;background:#84847f"></div>
<div class="t" style="left:0px;top:740px;width:30px;text-align:center;">35</div>
<div class="a" style="left:31px;top:771px;width:1339px;height:1px;background:#bebebe"></div>
<div class="a" style="left:0px;top:771px;width:30px;height:1px;background:#84847f"></div>
<div class="t" style="left:0px;top:757px;width:30px;text-align:center;">36</div>
<div class="a" style="left:31px;top:788px;width:1339px;height:1px;background:#bebebe"></div>
<div class="a" style="left:0px;top:788px;width:30px;height:1px;background:#84847f"></div>
<div class="t" style="left:0px;top:774px;width:30px;text-align:center;">37</div>
<div class="a" style="left:31px;top:805px;width:1339px;height:1px;background:#bebebe"></div>
<div class="a" style="left:0px;top:805px;width:30px;height:1px;background:#84847f"></div>
<div class="t" style="left:0px;top:791px;width:30px;text-align:center;">38</div>
<div class="a" style="left:31px;top:822px;width:1339px;height:1px;background:#bebebe"></div>
<div class="a" style="left:0px;top:822px;width:30px;height:1px;background:#84847f"></div>
<div class="t" style="left:0px;top:808px;width:30px;text-align:center;">39</div>
<div class="a" style="left:31px;top:839px;width:1339px;height:1px;background:#bebebe"></div>
<div class="a" style="left:0px;top:839px;width:30px;height:1px;background:#84847f"></div>
<div class="t" style="left:0px;top:825px;width:30px;text-align:center;">40</div>
<div class="a" style="left:31px;top:856px;width:1339px;height:1px;background:#bebebe"></div>
<div class="a" style="left:0px;top:856px;width:30px;height:1px;background:#84847f"></div>
<div class="t" style="left:0px;top:842px;width:30px;text-align:center;">41</div>
<div class="a" style="left:31px;top:143px;width:81px;height:16px;background:#8f9488 radial-gradient(circle,#d8bf78 0.55px,transparent 0.9px) 0 0/3px 3px"></div>
<div class="a" style="left:0px;top:160px;width:30px;height:16px;background:#8f9488 radial-gradient(circle,#d8bf78 0.55px,transparent 0.9px) 0 0/3px 3px"></div>
<div class="t" style="left:31px;top:146px;width:81px;text-align:center;color:#fff">A</div>
<div class="t" style="left:0px;top:162px;width:30px;text-align:center;color:#fff">1</div>
<div class="a" style="left:30px;top:159px;width:83px;height:18px;border:2px solid #8a8d85;background:transparent"></div>
<div class="a" style="left:110px;top:174px;width:5px;height:5px;background:#8a8d85"></div>
<div class="a" style="left:34px;top:183px;width:1198px;height:670px;background:#d6d6d6;border:1px solid #7a7a75;border-radius:5px 5px 0 0;box-shadow:0 0 14px 3px rgba(190,190,190,.5)"></div>
<div class="a" style="left:35px;top:184px;width:1196px;height:20px;background:linear-gradient(#e2e2e2,#dddddd 85%,#d6d6d6);border-radius:4px 4px 0 0"></div>
<div class="t" style="left:34px;top:190px;width:1198px;text-align:center;letter-spacing:0.95px;-webkit-text-stroke:0.35px #2b2627">Textimport</div>
<svg class="a" style="left:1207px;top:191px" width="10" height="10"><path d="M2 2L8.5 8.5M8.5 2L2 8.5" stroke="#8a8d85" stroke-width="2.2" stroke-linecap="round"/></svg>
<div class="t b" style="left:47px;top:220px;">Importieren</div>
<div class="t" style="left:59px;top:249px;">Zeichensatz:</div>
<div class="combo" style="left:164px;top:241px;width:1055px;height:29px"></div>
<div class="t" style="left:174px;top:249px;">Unicode (UTF-16)</div>
<div class="arr" style="left:1197px;top:253px;width:0px;height:0px;"></div>
<div class="t" style="left:59px;top:285px;">Gebietsschema:</div>
<div class="combo" style="left:164px;top:277px;width:1055px;height:29px"></div>
<div class="t" style="left:174px;top:285px;">Standard - Deutsch (Deutschland)</div>
<div class="arr" style="left:1197px;top:289px;width:0px;height:0px;"></div>
<div class="red" style="left:49px;top:276px;width:353px;height:31px"></div>
<div class="t" style="left:59px;top:320px;">Ab Zeile:</div>
<div class="combo" style="left:164px;top:312px;width:134px;height:30px;background:linear-gradient(#f8f8f8,#ececec);border-color:#8f8f8a"></div>
<div class="a" style="left:237px;top:313px;width:30px;height:28px;background:#cfcfcf;border-left:1px solid #b5b5b0"></div>
<div class="a" style="left:267px;top:313px;width:30px;height:28px;background:linear-gradient(#fbfbfb,#e4e4e4);border-left:1px solid #b5b5b0;border-radius:0 2px 2px 0"></div>
<div class="t" style="left:170px;top:320px;">1</div>
<div class="a" style="left:245px;top:326px;width:14px;height:2px;background:#6f706b"></div>
<div class="a" style="left:275px;top:326px;width:14px;height:2px;background:#3a3135"></div>
<div class="a" style="left:281px;top:320px;width:2px;height:14px;background:#3a3135"></div>
<div class="red" style="left:41px;top:346px;width:1187px;height:133px"></div>
<div class="t b" style="left:48px;top:356px;">Trennoptionen</div>
<div class="rb" style="left:63px;top:379px"></div>
<div class="t" style="left:83px;top:381px;">Feste Breite</div>
<div class="rb" style="left:643px;top:379px;background:#8f9289;border-color:#6e716a"></div>
<div class="a" style="left:648px;top:384px;width:6px;height:6px;background:#fff;border-radius:50%"></div>
<div class="t" style="left:663px;top:381px;">Getrennt</div>
<div class="cb" style="left:75px;top:411px"></div>
<div class="t" style="left:95px;top:413px;">Tabulator</div>
<div class="cb" style="left:256px;top:411px"></div>
<div class="t" style="left:276px;top:413px;">Komma</div>
<div class="cbx" style="left:424px;top:411px"></div>
<svg class="a" style="left:424px;top:411px" width="16" height="16"><path d="M5 5L11 11M11 5L5 11" stroke="#fff" stroke-width="2.2"/></svg>
<div class="t" style="left:444px;top:413px;">Semikolon</div>
<div class="cbx" style="left:593px;top:411px"></div>
<svg class="a" style="left:593px;top:411px" width="16" height="16"><path d="M5 5L11 11M11 5L5 11" stroke="#fff" stroke-width="2.2"/></svg>
<div class="t" style="left:613px;top:413px;">Leerzeichen</div>
<div class="cbx" style="left:770px;top:411px"></div>
<svg class="a" style="left:770px;top:411px" width="16" height="16"><path d="M5 5L11 11M11 5L5 11" stroke="#fff" stroke-width="2.2"/></svg>
<div class="t" style="left:790px;top:413px;">Andere</div>
<div class="combo" style="left:962px;top:405px;width:257px;height:29px;background:linear-gradient(#e8e8e8,#efefef)"></div>
<div class="t" style="left:968px;top:413px;">:</div>
<div class="cbx" style="left:75px;top:447px"></div>
<svg class="a" style="left:75px;top:447px" width="16" height="16"><path d="M5 5L11 11M11 5L5 11" stroke="#fff" stroke-width="2.2"/></svg>
<div class="t" style="left:95px;top:449px;">Feldtrenner zusammenfassen</div>
<div class="cb" style="left:424px;top:447px"></div>
<div class="t" style="left:444px;top:449px;">Leerräume beschneiden</div>
<div class="t" style="left:766px;top:449px;">Zeichenfolgen-Trennerzeichen:</div>
<div class="combo" style="left:962px;top:441px;width:257px;height:29px;background:linear-gradient(#e8e8e8,#efefef)"></div>
<div class="a" style="left:1187px;top:442px;width:31px;height:27px;background:linear-gradient(#fbfbfb,#e4e4e4);border-left:1px solid #b5b5b0;border-radius:0 2px 2px 0"></div>
<div class="arr" style="left:1197px;top:453px;width:0px;height:0px;"></div>
<div class="t b" style="left:47px;top:484px;">Weitere Optionen</div>
<div class="cb" style="left:63px;top:507px"></div>
<div class="t" style="left:83px;top:509px;">Felder in Hochkommata als Text formatieren</div>
<div class="cb" style="left:368px;top:507px"></div>
<div class="t" style="left:388px;top:509px;">Erweiterte Zahlenerkennung</div>
<div class="cb" style="left:63px;top:535px"></div>
<div class="t" style="left:83px;top:537px;">Formeln auswerten</div>
<div class="cb" style="left:368px;top:535px"></div>
<div class="t" style="left:388px;top:537px;">Leere Zellen überspringen</div>
<div class="t b" style="left:47px;top:568px;">Feldbefehle</div>
<div class="t" style="left:59px;top:597px;color:#93938e">Spaltentyp:</div>
<div class="combo" style="left:140px;top:588px;width:1079px;height:29px;background:linear-gradient(#d8d8d8,#cdcdcd);border-color:#a3a39e"></div>
<div class="arr" style="left:1197px;top:600px;border-top-color:#9a9a96"></div>
<div class="a" style="left:59px;top:624px;width:1160px;height:160px;background:#d6d6d6;border:1px solid #8a8a85"></div>
<div class="a" style="left:60px;top:625px;width:1121px;height:15px;background:#d6d6d6"></div>
<div class="a" style="left:84px;top:640px;width:1096px;height:96px;background:#fff"></div>
<div class="a" style="left:60px;top:640px;width:24px;height:96px;background:#d6d6d6"></div>
<div class="a" style="left:60px;top:640px;width:1120px;height:1px;background:#8a8a85"></div>
<div class="a" style="left:84px;top:656px;width:1096px;height:1px;background:#cfcfcf"></div>
<div class="a" style="left:60px;top:656px;width:24px;height:1px;background:#8a8a85"></div>
<div class="t" style="left:60px;top:641px;width:24px;text-align:center">1</div>
<div class="a" style="left:84px;top:672px;width:1096px;height:1px;background:#cfcfcf"></div>
<div class="a" style="left:60px;top:672px;width:24px;height:1px;background:#8a8a85"></div>
<div class="t" style="left:60px;top:657px;width:24px;text-align:center">2</div>
<div class="a" style="left:84px;top:688px;width:1096px;height:1px;background:#cfcfcf"></div>
<div class="a" style="left:60px;top:688px;width:24px;height:1px;background:#8a8a85"></div>
<div class="t" style="left:60px;top:673px;width:24px;text-align:center">3</div>
<div class="a" style="left:84px;top:704px;width:1096px;height:1px;background:#cfcfcf"></div>
<div class="a" style="left:60px;top:704px;width:24px;height:1px;background:#8a8a85"></div>
<div class="t" style="left:60px;top:689px;width:24px;text-align:center">4</div>
<div class="a" style="left:84px;top:720px;width:1096px;height:1px;background:#cfcfcf"></div>
<div class="a" style="left:60px;top:720px;width:24px;height:1px;background:#8a8a85"></div>
<div class="t" style="left:60px;top:705px;width:24px;text-align:center">5</div>
<div class="a" style="left:84px;top:736px;width:1096px;height:1px;background:#cfcfcf"></div>
<div class="a" style="left:60px;top:736px;width:24px;height:1px;background:#8a8a85"></div>
<div class="t" style="left:60px;top:721px;width:24px;text-align:center">6</div>
<div class="a" style="left:84px;top:624px;width:1px;height:112px;background:#8a8a85"></div>
<div class="a" style="left:148px;top:625px;width:1px;height:15px;background:#8a8a85"></div>
<div class="a" style="left:148px;top:641px;width:1px;height:95px;background:#cfcfcf"></div>
<div class="t" style="left:86px;top:626px;">Standard</div>
<div class="t" style="left:84px;top:641px;font-family:'Liberation Mono',monospace;color:#1e1a1b;letter-spacing:0.2px;-webkit-text-stroke:0.15px #1e1a1b">Kanal1</div>
<div class="t" style="left:84px;top:659px;font-family:'Liberation Mono',monospace;color:#1e1a1b;letter-spacing:0.2px;-webkit-text-stroke:0.15px #1e1a1b">Kanal1</div>
<div class="t" style="left:84px;top:675px;font-family:'Liberation Mono',monospace;color:#1e1a1b;letter-spacing:0.2px;-webkit-text-stroke:0.15px #1e1a1b">Kanal1</div>
<div class="t" style="left:84px;top:691px;font-family:'Liberation Mono',monospace;color:#1e1a1b;letter-spacing:0.2px;-webkit-text-stroke:0.15px #1e1a1b">Kanal1</div>
<div class="t" style="left:84px;top:707px;font-family:'Liberation Mono',monospace;color:#1e1a1b;letter-spacing:0.2px;-webkit-text-stroke:0.15px #1e1a1b">Kanal1</div>
<div class="t" style="left:84px;top:723px;font-family:'Liberation Mono',monospace;color:#1e1a1b;letter-spacing:0.2px;-webkit-text-stroke:0.15px #1e1a1b">Kanal1</div>
<div class="a" style="left:212px;top:625px;width:1px;height:15px;background:#8a8a85"></div>
<div class="a" style="left:212px;top:641px;width:1px;height:95px;background:#cfcfcf"></div>
<div class="t" style="left:150px;top:626px;">Standard</div>
<div class="t" style="left:148px;top:641px;font-family:'Liberation Mono',monospace;color:#1e1a1b;letter-spacing:0.2px;-webkit-text-stroke:0.15px #1e1a1b">B3dB</div>
<div class="t" style="left:148px;top:657px;font-family:'Liberation Mono',monospace;color:#1e1a1b;letter-spacing:0.2px;-webkit-text-stroke:0.15px #1e1a1b">B3dB</div>
<div class="t" style="left:148px;top:673px;font-family:'Liberation Mono',monospace;color:#1e1a1b;letter-spacing:0.2px;-webkit-text-stroke:0.15px #1e1a1b">B3dB</div>
<div class="t" style="left:148px;top:689px;font-family:'Liberation Mono',monospace;color:#1e1a1b;letter-spacing:0.2px;-webkit-text-stroke:0.15px #1e1a1b">B3dB</div>
<div class="t" style="left:148px;top:705px;font-family:'Liberation Mono',monospace;color:#1e1a1b;letter-spacing:0.2px;-webkit-text-stroke:0.15px #1e1a1b">B3dB</div>
<div class="t" style="left:148px;top:721px;font-family:'Liberation Mono',monospace;color:#1e1a1b;letter-spacing:0.2px;-webkit-text-stroke:0.15px #1e1a1b">B3dB</div>
<div class="a" style="left:276px;top:625px;width:1px;height:15px;background:#8a8a85"></div>
<div class="a" style="left:276px;top:641px;width:1px;height:95px;background:#cfcfcf"></div>
<div class="t" style="left:214px;top:626px;">Standard</div>
<div class="t" style="left:212px;top:641px;font-family:'Liberation Mono',monospace;color:#1e1a1b;letter-spacing:0.2px;-webkit-text-stroke:0.15px #1e1a1b">900</div>
<div class="t" style="left:212px;top:657px;font-family:'Liberation Mono',monospace;color:#1e1a1b;letter-spacing:0.2px;-webkit-text-stroke:0.15px #1e1a1b">600</div>
<div class="t" style="left:212px;top:673px;font-family:'Liberation Mono',monospace;color:#1e1a1b;letter-spacing:0.2px;-webkit-text-stroke:0.15px #1e1a1b">900</div>
<div class="t" style="left:212px;top:689px;font-family:'Liberation Mono',monospace;color:#1e1a1b;letter-spacing:0.2px;-webkit-text-stroke:0.15px #1e1a1b">900</div>
<div class="t" style="left:212px;top:705px;font-family:'Liberation Mono',monospace;color:#1e1a1b;letter-spacing:0.2px;-webkit-text-stroke:0.15px #1e1a1b">600</div>
<div class="t" style="left:212px;top:721px;font-family:'Liberation Mono',monospace;color:#1e1a1b;letter-spacing:0.2px;-webkit-text-stroke:0.15px #1e1a1b">900</div>
<div class="a" style="left:340px;top:625px;width:1px;height:15px;background:#8a8a85"></div>
<div class="a" style="left:340px;top:641px;width:1px;height:95px;background:#cfcfcf"></div>
<div class="t" style="left:278px;top:626px;">Standard</div>
<div class="t" style="left:276px;top:641px;font-family:'Liberation Mono',monospace;color:#1e1a1b;letter-spacing:0.2px;-webkit-text-stroke:0.15px #1e1a1b">Hz</div>
<div class="t" style="left:276px;top:657px;font-family:'Liberation Mono',monospace;color:#1e1a1b;letter-spacing:0.2px;-webkit-text-stroke:0.15px #1e1a1b">Hz</div>
<div class="t" style="left:276px;top:673px;font-family:'Liberation Mono',monospace;color:#1e1a1b;letter-spacing:0.2px;-webkit-text-stroke:0.15px #1e1a1b">Hz</div>
<div class="t" style="left:276px;top:689px;font-family:'Liberation Mono',monospace;color:#1e1a1b;letter-spacing:0.2px;-webkit-text-stroke:0.15px #1e1a1b">Hz</div>
<div class="t" style="left:276px;top:705px;font-family:'Liberation Mono',monospace;color:#1e1a1b;letter-spacing:0.2px;-webkit-text-stroke:0.15px #1e1a1b">Hz</div>
<div class="t" style="left:276px;top:721px;font-family:'Liberation Mono',monospace;color:#1e1a1b;letter-spacing:0.2px;-webkit-text-stroke:0.15px #1e1a1b">Hz</div>
<div class="a" style="left:404px;top:625px;width:1px;height:15px;background:#8a8a85"></div>
<div class="a" style="left:404px;top:641px;width:1px;height:95px;background:#cfcfcf"></div>
<div class="t" style="left:342px;top:626px;">Standard</div>
<div class="t" style="left:340px;top:641px;font-family:'Liberation Mono',monospace;color:#1e1a1b;letter-spacing:0.2px;-webkit-text-stroke:0.15px #1e1a1b">fm</div>
<div class="t" style="left:340px;top:657px;font-family:'Liberation Mono',monospace;color:#1e1a1b;letter-spacing:0.2px;-webkit-text-stroke:0.15px #1e1a1b">fm</div>
<div class="t" style="left:340px;top:673px;font-family:'Liberation Mono',monospace;color:#1e1a1b;letter-spacing:0.2px;-webkit-text-stroke:0.15px #1e1a1b">fm</div>
<div class="t" style="left:340px;top:689px;font-family:'Liberation Mono',monospace;color:#1e1a1b;letter-spacing:0.2px;-webkit-text-stroke:0.15px #1e1a1b">fm</div>
<div class="t" style="left:340px;top:705px;font-family:'Liberation Mono',monospace;color:#1e1a1b;letter-spacing:0.2px;-webkit-text-stroke:0.15px #1e1a1b">fm</div>
<div class="t" style="left:340px;top:721px;font-family:'Liberation Mono',monospace;color:#1e1a1b;letter-spacing:0.2px;-webkit-text-stroke:0.15px #1e1a1b">fm</div>
<div class="a" style="left:468px;top:625px;width:1px;height:15px;background:#8a8a85"></div>
<div class="a" style="left:468px;top:641px;width:1px;height:95px;background:#cfcfcf"></div>
<div class="t" style="left:406px;top:626px;">Standard</div>
<div class="t" style="left:404px;top:641px;font-family:'Liberation Mono',monospace;color:#1e1a1b;letter-spacing:0.2px;-webkit-text-stroke:0.15px #1e1a1b">11,996</div>
<div class="t" style="left:404px;top:657px;font-family:'Liberation Mono',monospace;color:#1e1a1b;letter-spacing:0.2px;-webkit-text-stroke:0.15px #1e1a1b">11,9974</div>
<div class="t" style="left:404px;top:673px;font-family:'Liberation Mono',monospace;color:#1e1a1b;letter-spacing:0.2px;-webkit-text-stroke:0.15px #1e1a1b">11,9962</div>
<div class="t" style="left:404px;top:689px;font-family:'Liberation Mono',monospace;color:#1e1a1b;letter-spacing:0.2px;-webkit-text-stroke:0.15px #1e1a1b">11,996</div>
<div class="t" style="left:404px;top:705px;font-family:'Liberation Mono',monospace;color:#1e1a1b;letter-spacing:0.2px;-webkit-text-stroke:0.15px #1e1a1b">11,9974</div>
<div class="t" style="left:404px;top:721px;font-family:'Liberation Mono',monospace;color:#1e1a1b;letter-spacing:0.2px;-webkit-text-stroke:0.15px #1e1a1b">11,9962</div>
<div class="a" style="left:532px;top:625px;width:1px;height:15px;background:#8a8a85"></div>
<div class="a" style="left:532px;top:641px;width:1px;height:95px;background:#cfcfcf"></div>
<div class="t" style="left:470px;top:626px;">Standard</div>
<div class="t" style="left:468px;top:641px;font-family:'Liberation Mono',monospace;color:#1e1a1b;letter-spacing:0.2px;-webkit-text-stroke:0.15px #1e1a1b">MHz</div>
<div class="t" style="left:468px;top:657px;font-family:'Liberation Mono',monospace;color:#1e1a1b;letter-spacing:0.2px;-webkit-text-stroke:0.15px #1e1a1b">MHz</div>
<div class="t" style="left:468px;top:673px;font-family:'Liberation Mono',monospace;color:#1e1a1b;letter-spacing:0.2px;-webkit-text-stroke:0.15px #1e1a1b">MHz</div>
<div class="t" style="left:468px;top:689px;font-family:'Liberation Mono',monospace;color:#1e1a1b;letter-spacing:0.2px;-webkit-text-stroke:0.15px #1e1a1b">MHz</div>
<div class="t" style="left:468px;top:705px;font-family:'Liberation Mono',monospace;color:#1e1a1b;letter-spacing:0.2px;-webkit-text-stroke:0.15px #1e1a1b">MHz</div>
<div class="t" style="left:468px;top:721px;font-family:'Liberation Mono',monospace;color:#1e1a1b;letter-spacing:0.2px;-webkit-text-stroke:0.15px #1e1a1b">MHz</div>
<div class="a" style="left:596px;top:625px;width:1px;height:15px;background:#8a8a85"></div>
<div class="a" style="left:596px;top:641px;width:1px;height:95px;background:#cfcfcf"></div>
<div class="t" style="left:534px;top:626px;">Standard</div>
<div class="t" style="left:532px;top:641px;font-family:'Liberation Mono',monospace;color:#1e1a1b;letter-spacing:0.2px;-webkit-text-stroke:0.15px #1e1a1b">f1</div>
<div class="t" style="left:532px;top:657px;font-family:'Liberation Mono',monospace;color:#1e1a1b;letter-spacing:0.2px;-webkit-text-stroke:0.15px #1e1a1b">f1</div>
<div class="t" style="left:532px;top:673px;font-family:'Liberation Mono',monospace;color:#1e1a1b;letter-spacing:0.2px;-webkit-text-stroke:0.15px #1e1a1b">f1</div>
<div class="t" style="left:532px;top:689px;font-family:'Liberation Mono',monospace;color:#1e1a1b;letter-spacing:0.2px;-webkit-text-stroke:0.15px #1e1a1b">f1</div>
<div class="t" style="left:532px;top:705px;font-family:'Liberation Mono',monospace;color:#1e1a1b;letter-spacing:0.2px;-webkit-text-stroke:0.15px #1e1a1b">f1</div>
<div class="t" style="left:532px;top:721px;font-family:'Liberation Mono',monospace;color:#1e1a1b;letter-spacing:0.2px;-webkit-text-stroke:0.15px #1e1a1b">f1</div>
<div class="a" style="left:660px;top:625px;width:1px;height:15px;background:#8a8a85"></div>
<div class="a" style="left:660px;top:641px;width:1px;height:95px;background:#cfcfcf"></div>
<div class="t" style="left:598px;top:626px;">Standard</div>
<div class="t" style="left:596px;top:641px;font-family:'Liberation Mono',monospace;color:#1e1a1b;letter-spacing:0.2px;-webkit-text-stroke:0.15px #1e1a1b">11,9955</div>
<div class="t" style="left:596px;top:657px;font-family:'Liberation Mono',monospace;color:#1e1a1b;letter-spacing:0.2px;-webkit-text-stroke:0.15px #1e1a1b">11,997</div>
<div class="t" style="left:596px;top:673px;font-family:'Liberation Mono',monospace;color:#1e1a1b;letter-spacing:0.2px;-webkit-text-stroke:0.15px #1e1a1b">11,9957</div>
<div class="t" style="left:596px;top:689px;font-family:'Liberation Mono',monospace;color:#1e1a1b;letter-spacing:0.2px;-webkit-text-stroke:0.15px #1e1a1b">11,9955</div>
<div class="t" style="left:596px;top:705px;font-family:'Liberation Mono',monospace;color:#1e1a1b;letter-spacing:0.2px;-webkit-text-stroke:0.15px #1e1a1b">11,997</div>
<div class="t" style="left:596px;top:721px;font-family:'Liberation Mono',monospace;color:#1e1a1b;letter-spacing:0.2px;-webkit-text-stroke:0.15px #1e1a1b">11,9957</div>
<div class="a" style="left:724px;top:625px;width:1px;height:15px;background:#8a8a85"></div>
<div class="a" style="left:724px;top:641px;width:1px;height:95px;background:#cfcfcf"></div>
<div class="t" style="left:662px;top:626px;">Standard</div>
<div class="t" style="left:660px;top:641px;font-family:'Liberation Mono',monospace;color:#1e1a1b;letter-spacing:0.2px;-webkit-text-stroke:0.15px #1e1a1b">MHz</div>
<div class="t" style="left:660px;top:657px;font-family:'Liberation Mono',monospace;color:#1e1a1b;letter-spacing:0.2px;-webkit-text-stroke:0.15px #1e1a1b">MHz</div>
<div class="t" style="left:660px;top:673px;font-family:'Liberation Mono',monospace;color:#1e1a1b;letter-spacing:0.2px;-webkit-text-stroke:0.15px #1e1a1b">MHz</div>
<div class="t" style="left:660px;top:689px;font-family:'Liberation Mono',monospace;color:#1e1a1b;letter-spacing:0.2px;-webkit-text-stroke:0.15px #1e1a1b">MHz</div>
<div class="t" style="left:660px;top:705px;font-family:'Liberation Mono',monospace;color:#1e1a1b;letter-spacing:0.2px;-webkit-text-stroke:0.15px #1e1a1b">MHz</div>
<div class="t" style="left:660px;top:721px;font-family:'Liberation Mono',monospace;color:#1e1a1b;letter-spacing:0.2px;-webkit-text-stroke:0.15px #1e1a1b">MHz</div>
<div class="a" style="left:788px;top:625px;width:1px;height:15px;background:#8a8a85"></div>
<div class="a" style="left:788px;top:641px;width:1px;height:95px;background:#cfcfcf"></div>
<div class="t" style="left:726px;top:626px;">Standard</div>
<div class="t" style="left:724px;top:641px;font-family:'Liberation Mono',monospace;color:#1e1a1b;letter-spacing:0.2px;-webkit-text-stroke:0.15px #1e1a1b">f2</div>
<div class="t" style="left:724px;top:657px;font-family:'Liberation Mono',monospace;color:#1e1a1b;letter-spacing:0.2px;-webkit-text-stroke:0.15px #1e1a1b">f2</div>
<div class="t" style="left:724px;top:673px;font-family:'Liberation Mono',monospace;color:#1e1a1b;letter-spacing:0.2px;-webkit-text-stroke:0.15px #1e1a1b">f2</div>
<div class="t" style="left:724px;top:689px;font-family:'Liberation Mono',monospace;color:#1e1a1b;letter-spacing:0.2px;-webkit-text-stroke:0.15px #1e1a1b">f2</div>
<div class="t" style="left:724px;top:705px;font-family:'Liberation Mono',monospace;color:#1e1a1b;letter-spacing:0.2px;-webkit-text-stroke:0.15px #1e1a1b">f2</div>
<div class="t" style="left:724px;top:721px;font-family:'Liberation Mono',monospace;color:#1e1a1b;letter-spacing:0.2px;-webkit-text-stroke:0.15px #1e1a1b">f2</div>
<div class="a" style="left:852px;top:625px;width:1px;height:15px;background:#8a8a85"></div>
<div class="a" style="left:852px;top:641px;width:1px;height:95px;background:#cfcfcf"></div>
<div class="t" style="left:790px;top:626px;">Standard</div>
<div class="t" style="left:788px;top:641px;font-family:'Liberation Mono',monospace;color:#1e1a1b;letter-spacing:0.2px;-webkit-text-stroke:0.15px #1e1a1b">11,9964</div>
<div class="t" style="left:788px;top:657px;font-family:'Liberation Mono',monospace;color:#1e1a1b;letter-spacing:0.2px;-webkit-text-stroke:0.15px #1e1a1b">11,9977</div>
<div class="t" style="left:788px;top:673px;font-family:'Liberation Mono',monospace;color:#1e1a1b;letter-spacing:0.2px;-webkit-text-stroke:0.15px #1e1a1b">11,9966</div>
<div class="t" style="left:788px;top:689px;font-family:'Liberation Mono',monospace;color:#1e1a1b;letter-spacing:0.2px;-webkit-text-stroke:0.15px #1e1a1b">11,9964</div>
<div class="t" style="left:788px;top:705px;font-family:'Liberation Mono',monospace;color:#1e1a1b;letter-spacing:0.2px;-webkit-text-stroke:0.15px #1e1a1b">11,9977</div>
<div class="t" style="left:788px;top:721px;font-family:'Liberation Mono',monospace;color:#1e1a1b;letter-spacing:0.2px;-webkit-text-stroke:0.15px #1e1a1b">11,9966</div>
<div class="a" style="left:916px;top:625px;width:1px;height:15px;background:#8a8a85"></div>
<div class="a" style="left:916px;top:641px;width:1px;height:95px;background:#cfcfcf"></div>
<div class="t" style="left:854px;top:626px;">Standard</div>
<div class="t" style="left:852px;top:641px;font-family:'Liberation Mono',monospace;color:#1e1a1b;letter-spacing:0.2px;-webkit-text-stroke:0.15px #1e1a1b">MHz</div>
<div class="t" style="left:852px;top:657px;font-family:'Liberation Mono',monospace;color:#1e1a1b;letter-spacing:0.2px;-webkit-text-stroke:0.15px #1e1a1b">MHz</div>
<div class="t" style="left:852px;top:673px;font-family:'Liberation Mono',monospace;color:#1e1a1b;letter-spacing:0.2px;-webkit-text-stroke:0.15px #1e1a1b">MHz</div>
<div class="t" style="left:852px;top:689px;font-family:'Liberation Mono',monospace;color:#1e1a1b;letter-spacing:0.2px;-webkit-text-stroke:0.15px #1e1a1b">MHz</div>
<div class="t" style="left:852px;top:705px;font-family:'Liberation Mono',monospace;color:#1e1a1b;letter-spacing:0.2px;-webkit-text-stroke:0.15px #1e1a1b">MHz</div>
<div class="t" style="left:852px;top:721px;font-family:'Liberation Mono',monospace;color:#1e1a1b;letter-spacing:0.2px;-webkit-text-stroke:0.15px #1e1a1b">MHz</div>
<div class="a" style="left:980px;top:625px;width:1px;height:15px;background:#8a8a85"></div>
<div class="a" style="left:980px;top:641px;width:1px;height:95px;background:#cfcfcf"></div>
<div class="t" style="left:918px;top:626px;">Standard</div>
<div class="t" style="left:916px;top:641px;font-family:'Liberation Mono',monospace;color:#1e1a1b;letter-spacing:0.2px;-webkit-text-stroke:0.15px #1e1a1b">+</div>
<div class="t" style="left:916px;top:657px;font-family:'Liberation Mono',monospace;color:#1e1a1b;letter-spacing:0.2px;-webkit-text-stroke:0.15px #1e1a1b">+</div>
<div class="t" style="left:916px;top:673px;font-family:'Liberation Mono',monospace;color:#1e1a1b;letter-spacing:0.2px;-webkit-text-stroke:0.15px #1e1a1b">+</div>
<div class="t" style="left:916px;top:689px;font-family:'Liberation Mono',monospace;color:#1e1a1b;letter-spacing:0.2px;-webkit-text-stroke:0.15px #1e1a1b">+</div>
<div class="t" style="left:916px;top:705px;font-family:'Liberation Mono',monospace;color:#1e1a1b;letter-spacing:0.2px;-webkit-text-stroke:0.15px #1e1a1b">+</div>
<div class="t" style="left:916px;top:721px;font-family:'Liberation Mono',monospace;color:#1e1a1b;letter-spacing:0.2px;-webkit-text-stroke:0.15px #1e1a1b">+</div>
<div class="a" style="left:1044px;top:625px;width:1px;height:15px;background:#8a8a85"></div>
<div class="a" style="left:1044px;top:641px;width:1px;height:95px;background:#cfcfcf"></div>
<div class="t" style="left:982px;top:626px;">Standard</div>
<div class="t" style="left:980px;top:641px;font-family:'Liberation Mono',monospace;color:#1e1a1b;letter-spacing:0.2px;-webkit-text-stroke:0.15px #1e1a1b">Guete</div>
<div class="t" style="left:980px;top:657px;font-family:'Liberation Mono',monospace;color:#1e1a1b;letter-spacing:0.2px;-webkit-text-stroke:0.15px #1e1a1b">Guete</div>
<div class="t" style="left:980px;top:673px;font-family:'Liberation Mono',monospace;color:#1e1a1b;letter-spacing:0.2px;-webkit-text-stroke:0.15px #1e1a1b">Guete</div>
<div class="t" style="left:980px;top:689px;font-family:'Liberation Mono',monospace;color:#1e1a1b;letter-spacing:0.2px;-webkit-text-stroke:0.15px #1e1a1b">Guete</div>
<div class="t" style="left:980px;top:705px;font-family:'Liberation Mono',monospace;color:#1e1a1b;letter-spacing:0.2px;-webkit-text-stroke:0.15px #1e1a1b">Guete</div>
<div class="t" style="left:980px;top:721px;font-family:'Liberation Mono',monospace;color:#1e1a1b;letter-spacing:0.2px;-webkit-text-stroke:0.15px #1e1a1b">Guete</div>
<div class="a" style="left:1108px;top:625px;width:1px;height:15px;background:#8a8a85"></div>
<div class="a" style="left:1108px;top:641px;width:1px;height:95px;background:#cfcfcf"></div>
<div class="t" style="left:1046px;top:626px;">Standard</div>
<div class="t" style="left:1044px;top:641px;font-family:'Liberation Mono',monospace;color:#1e1a1b;letter-spacing:0.2px;-webkit-text-stroke:0.15px #1e1a1b">Q</div>
<div class="t" style="left:1044px;top:657px;font-family:'Liberation Mono',monospace;color:#1e1a1b;letter-spacing:0.2px;-webkit-text-stroke:0.15px #1e1a1b">Q</div>
<div class="t" style="left:1044px;top:673px;font-family:'Liberation Mono',monospace;color:#1e1a1b;letter-spacing:0.2px;-webkit-text-stroke:0.15px #1e1a1b">Q</div>
<div class="t" style="left:1044px;top:689px;font-family:'Liberation Mono',monospace;color:#1e1a1b;letter-spacing:0.2px;-webkit-text-stroke:0.15px #1e1a1b">Q</div>
<div class="t" style="left:1044px;top:705px;font-family:'Liberation Mono',monospace;color:#1e1a1b;letter-spacing:0.2px;-webkit-text-stroke:0.15px #1e1a1b">Q</div>
<div class="t" style="left:1044px;top:721px;font-family:'Liberation Mono',monospace;color:#1e1a1b;letter-spacing:0.2px;-webkit-text-stroke:0.15px #1e1a1b">Q</div>
<div class="a" style="left:1180px;top:625px;width:1px;height:15px;background:#8a8a85"></div>
<div class="a" style="left:1180px;top:641px;width:1px;height:95px;background:#cfcfcf"></div>
<div class="t" style="left:1110px;top:626px;">Standard</div>
<div class="t" style="left:1108px;top:641px;font-family:'Liberation Mono',monospace;color:#1e1a1b;letter-spacing:0.2px;-webkit-text-stroke:0.15px #1e1a1b">13328,89</div>
<div class="t" style="left:1108px;top:657px;font-family:'Liberation Mono',monospace;color:#1e1a1b;letter-spacing:0.2px;-webkit-text-stroke:0.15px #1e1a1b">19995,58</div>
<div class="t" style="left:1108px;top:673px;font-family:'Liberation Mono',monospace;color:#1e1a1b;letter-spacing:0.2px;-webkit-text-stroke:0.15px #1e1a1b">13329,06</div>
<div class="t" style="left:1108px;top:689px;font-family:'Liberation Mono',monospace;color:#1e1a1b;letter-spacing:0.2px;-webkit-text-stroke:0.15px #1e1a1b">13328,89</div>
<div class="t" style="left:1108px;top:705px;font-family:'Liberation Mono',monospace;color:#1e1a1b;letter-spacing:0.2px;-webkit-text-stroke:0.15px #1e1a1b">19995,58</div>
<div class="t" style="left:1108px;top:721px;font-family:'Liberation Mono',monospace;color:#1e1a1b;letter-spacing:0.2px;-webkit-text-stroke:0.15px #1e1a1b">13329,06</div>
<div class="a" style="left:1207px;top:626px;width:11px;height:144px;background:linear-gradient(90deg,#fdfdfd,#e4e4e4);border:1px solid #8f8f8a;border-radius:6px"></div>
<div class="a" style="left:61px;top:772px;width:1145px;height:11px;background:linear-gradient(#fdfdfd,#e4e4e4);border:1px solid #8f8f8a;border-radius:6px"></div>
<div class="a" style="left:1207px;top:772px;width:11px;height:11px;background:#d6d6d6;border:1px solid #8f8f8a"></div>
<div class="btn" style="left:53px;top:802px;width:108px;height:32px"></div>
<div class="t" style="left:53px;top:812px;width:108px;text-align:center">Hilfe</div>
<div class="btn" style="left:991px;top:802px;width:108px;height:32px"></div>
<div class="t" style="left:991px;top:812px;width:108px;text-align:center">Abbrechen</div>
<div class="btn" style="left:1105px;top:802px;width:108px;height:32px"></div>
<div class="t" style="left:1105px;top:812px;width:108px;text-align:center">OK</div>
</body></html>
